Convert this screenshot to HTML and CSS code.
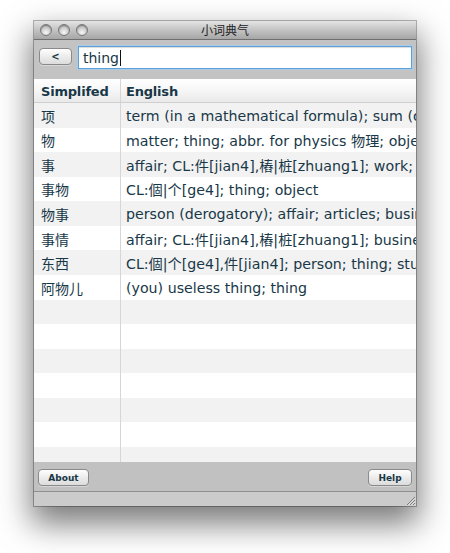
FILE: index.html
```html
<!DOCTYPE html>
<html lang="zh">
<head>
<meta charset="utf-8">
<title>小词典气</title>
<link rel="stylesheet" href="styles.css">
</head>
<body>
<div class="window">
  <div class="titlebar">
    <div class="lights">
      <span class="light"></span><span class="light"></span><span class="light"></span>
    </div>
    <div class="title">小词典气</div>
  </div>

  <div class="toolbar">
    <button class="btn back">&lt;</button>
    <div class="search"><span class="query">thing</span><span class="caret"></span></div>
  </div>

  <div class="table">
    <div class="row head">
      <div class="cell c1">Simplifed</div>
      <div class="cell c2">English</div>
    </div>
    <div class="body">
      <div class="row"><div class="cell c1">项</div><div class="cell c2">term (in a mathematical formula); sum (of money); item</div></div>
      <div class="row"><div class="cell c1">物</div><div class="cell c2">matter; thing; abbr. for physics 物理; object</div></div>
      <div class="row"><div class="cell c1">事</div><div class="cell c2">affair; CL:件[jian4],樁|桩[zhuang1]; work; matter</div></div>
      <div class="row"><div class="cell c1">事物</div><div class="cell c2">CL:個|个[ge4]; thing; object</div></div>
      <div class="row"><div class="cell c1">物事</div><div class="cell c2">person (derogatory); affair; articles; business</div></div>
      <div class="row"><div class="cell c1">事情</div><div class="cell c2">affair; CL:件[jian4],樁|桩[zhuang1]; business</div></div>
      <div class="row"><div class="cell c1">东西</div><div class="cell c2">CL:個|个[ge4],件[jian4]; person; thing; stuff</div></div>
      <div class="row"><div class="cell c1">阿物儿</div><div class="cell c2">(you) useless thing; thing</div></div>
      <div class="row"><div class="cell c1"></div><div class="cell c2"></div></div>
      <div class="row"><div class="cell c1"></div><div class="cell c2"></div></div>
      <div class="row"><div class="cell c1"></div><div class="cell c2"></div></div>
      <div class="row"><div class="cell c1"></div><div class="cell c2"></div></div>
      <div class="row"><div class="cell c1"></div><div class="cell c2"></div></div>
      <div class="row"><div class="cell c1"></div><div class="cell c2"></div></div>
      <div class="row"><div class="cell c1"></div><div class="cell c2"></div></div>
      <div class="row"><div class="cell c1"></div><div class="cell c2"></div></div>
    </div>
  </div>

  <div class="footer">
    <button class="btn about">About</button>
    <button class="btn help">Help</button>
  </div>

  <div class="statusbar">
    <svg class="grip" width="12" height="12" viewBox="0 0 12 12">
      <path d="M11 3 L3 11 M11 6 L6 11 M11 9 L9 11" stroke="#7a7a7a" stroke-width="1"/>
      <path d="M11.5 4 L4 11.5 M11.5 7 L7 11.5 M11.5 10 L10 11.5" stroke="#eeeeee" stroke-width="0.8"/>
    </svg>
  </div>
</div>
</body>
</html>
```

FILE: styles.css
```css
html, body {
  margin: 0;
  padding: 0;
  background: #ffffff;
}

body {
  width: 450px;
  height: 553px;
  overflow: hidden;
  font-family: "DejaVu Sans", "Noto Sans CJK SC", sans-serif;
  color: #183848;
}

.window {
  margin: 21px 0 0 34px;
  width: 382px;
  height: 485px;
  display: flex;
  flex-direction: column;
  background: #c1c1c1;
  box-shadow: 0 0 0 1px rgba(0, 0, 0, 0.28), 0 15px 30px 3px rgba(0, 0, 0, 0.52);
  overflow: hidden;
}

/* title bar with window buttons */
.titlebar {
  height: 18px;
  flex: none;
  position: relative;
  display: flex;
  align-items: center;
  justify-content: center;
  background: linear-gradient(#e4e4e4, #c9c9c9 40%, #a6a6a6);
  border-bottom: 1px solid #6f6f6f;
}

.lights {
  position: absolute;
  left: 6px;
  top: 3px;
  display: flex;
  gap: 6px;
}

.light {
  width: 12px;
  height: 12px;
  border-radius: 50%;
  box-sizing: border-box;
  border: 1px solid #787878;
  background: radial-gradient(circle at 50% 75%, #f6f6f6 0, #d2d2d2 45%, #979797 100%);
  box-shadow: inset 0 1px 1px rgba(0, 0, 0, 0.25);
}

.title {
  font-family: "Noto Sans CJK SC", sans-serif;
  font-size: 12px;
  line-height: 18px;
  color: #222222;
}

/* search toolbar */
.toolbar {
  height: 39px;
  flex: none;
  box-sizing: border-box;
  display: flex;
  align-items: flex-start;
  background: #c3c3c3;
  padding: 0 4px 0 5px;
}

.btn {
  font-family: "DejaVu Sans", sans-serif;
  font-weight: bold;
  font-size: 9px;
  color: #183848;
  height: 17px;
  padding: 0;
  box-sizing: border-box;
  border: 1px solid #8a8a8a;
  border-radius: 4px;
  background: linear-gradient(#fefefe, #ececec 50%, #dcdcdc);
  box-shadow: 0 1px 0 rgba(255, 255, 255, 0.35);
  display: flex;
  align-items: center;
  justify-content: center;
}

.back {
  width: 33px;
  margin-top: 8px;
  font-size: 10px;
}

.search {
  margin-left: 6px;
  margin-top: 6px;
  width: 335px;
  height: 23px;
  box-sizing: border-box;
  background: #ffffff;
  border: 1px solid #5f9fd4;
  box-shadow: 0 0 0 1px #a7cdea, inset 0 1px 1px rgba(0, 0, 0, 0.15);
  display: flex;
  align-items: center;
  padding-left: 4px;
  font-size: 14px;
  color: #183848;
}

.caret {
  width: 1px;
  height: 16px;
  margin-left: 1px;
  background: #111;
}

/* result table */
.table {
  height: 383px;
  flex: none;
  display: flex;
  flex-direction: column;
  background: #ffffff;
  overflow: hidden;
}

.row {
  display: grid;
  grid-template-columns: 87px 1fr;
  height: 24.57px;
  flex: none;
  font-size: 14.2px;
}

.row.head {
  height: 24px;
  box-sizing: border-box;
  border-bottom: 1px solid #cfcfcf;
  background: linear-gradient(#ffffff, #f6f6f6 50%, #e9e9e9);
  font-weight: bold;
  font-size: 13px;
  letter-spacing: -0.2px;
}

.body {
  flex: 1;
  overflow: hidden;
}

.body .row:nth-child(odd) {
  background: #f2f2f2;
}

.cell {
  white-space: nowrap;
  overflow: hidden;
  display: flex;
  align-items: center;
  padding-top: 1px;
}

.c1 {
  box-sizing: border-box;
  border-right: 1px solid #d6d6d6;
  padding-left: 7px;
  font-family: "Noto Sans CJK SC", sans-serif;
  font-size: 14px;
}

.head .c1 {
  font-family: "DejaVu Sans", sans-serif;
  font-size: 13px;
}

.c2 {
  padding-left: 5px;
  font-family: "DejaVu Sans", "Noto Sans CJK SC", sans-serif;
}

/* bottom buttons */
.footer {
  height: 29px;
  flex: none;
  box-sizing: border-box;
  display: flex;
  justify-content: space-between;
  align-items: flex-start;
  padding: 7px 4px 0 4px;
  background: #c1c1c1;
}

.about {
  width: 51px;
}

.help {
  width: 44px;
}

.statusbar {
  height: 15px;
  flex: none;
  box-sizing: border-box;
  border-top: 1px solid #8f8f8f;
  background: #cbcbcb;
  display: flex;
  justify-content: flex-end;
  align-items: flex-end;
}

.grip {
  display: block;
}
```
